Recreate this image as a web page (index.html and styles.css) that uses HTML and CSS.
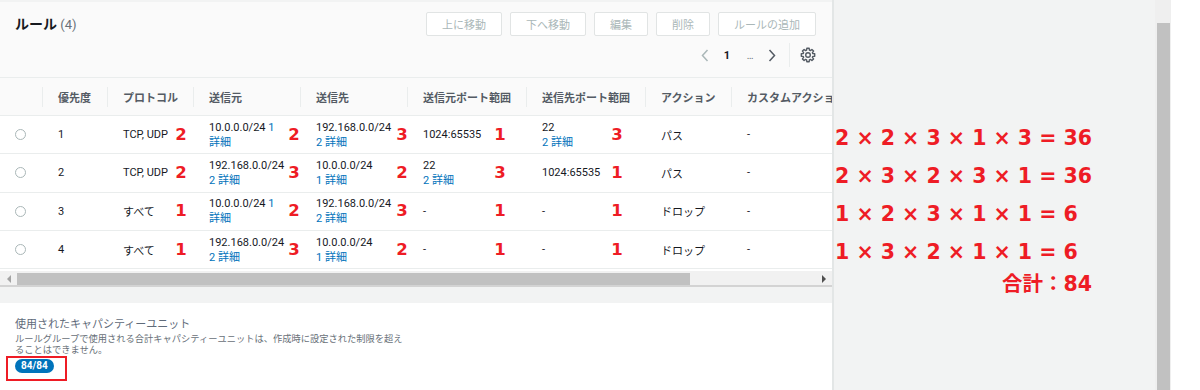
FILE: index.html
```html
<!DOCTYPE html>
<html lang="ja">
<head>
<meta charset="utf-8">
<title>ルール</title>
<link rel="stylesheet" href="styles.css">
</head>
<body>
<div class="page">
  <div class="main">
    <section class="card">
      <div class="hdr">
        <h2 class="title">ルール <span class="count">(4)</span></h2>
        <div class="tools">
          <div class="btns">
            <button class="btn">上に移動</button>
            <button class="btn">下へ移動</button>
            <button class="btn">編集</button>
            <button class="btn">削除</button>
            <button class="btn">ルールの追加</button>
          </div>
          <div class="pager">
            <span class="pg prev"><svg width="8" height="13" viewBox="0 0 8 13"><polyline points="6.5,1 1.5,6.5 6.5,12" fill="none" stroke="#aab7b8" stroke-width="1.5"/></svg></span>
            <span class="pg num">1</span>
            <span class="pg dots">…</span>
            <span class="pg next"><svg width="8" height="13" viewBox="0 0 8 13"><polyline points="1.5,1 6.5,6.5 1.5,12" fill="none" stroke="#545b64" stroke-width="1.5"/></svg></span>
            <span class="vsep"></span>
            <span class="gear"><svg width="16" height="16" viewBox="0 0 16 16"><polygon points="12.81,6.62 14.70,6.82 14.70,9.18 12.81,9.38 12.37,10.42 13.57,11.90 11.90,13.57 10.42,12.37 9.38,12.81 9.18,14.70 6.82,14.70 6.62,12.81 5.58,12.37 4.10,13.57 2.43,11.90 3.63,10.42 3.19,9.38 1.30,9.18 1.30,6.82 3.19,6.62 3.63,5.58 2.43,4.10 4.10,2.43 5.58,3.63 6.62,3.19 6.82,1.30 9.18,1.30 9.38,3.19 10.42,3.63 11.90,2.43 13.57,4.10 12.37,5.58" fill="none" stroke="#545b64" stroke-width="1.4" stroke-linejoin="round"/><circle cx="8" cy="8" r="2.3" fill="none" stroke="#545b64" stroke-width="1.4"/></svg></span>
          </div>
        </div>
      </div>

      <div class="tablewrap">
        <div class="grid">
          <div class="row head">
            <div class="c"></div>
            <div class="c"><span class="h">優先度</span></div>
            <div class="c"><span class="h">プロトコル</span></div>
            <div class="c"><span class="h">送信元</span></div>
            <div class="c"><span class="h">送信先</span></div>
            <div class="c"><span class="h">送信元ポート範囲</span></div>
            <div class="c"><span class="h">送信先ポート範囲</span></div>
            <div class="c"><span class="h">アクション</span></div>
            <div class="c"><span class="h">カスタムアクション</span></div>
          </div>

          <div class="row">
            <div class="c rad"><span class="radio"></span></div>
            <div class="c">1</div>
            <div class="c proto">TCP, UDP<span class="n">2</span></div>
            <div class="c src"><div class="two">10.0.0.0/24 <span class="lnk">1</span><br><span class="lnk">詳細</span></div><span class="n">2</span></div>
            <div class="c dst"><div class="two">192.168.0.0/24<br><span class="lnk">2 詳細</span></div><span class="n">3</span></div>
            <div class="c sport">1024:65535<span class="n">1</span></div>
            <div class="c dport"><div class="two">22<br><span class="lnk">2 詳細</span></div><span class="n">3</span></div>
            <div class="c">パス</div>
            <div class="c">-</div>
          </div>

          <div class="row">
            <div class="c rad"><span class="radio"></span></div>
            <div class="c">2</div>
            <div class="c proto">TCP, UDP<span class="n">2</span></div>
            <div class="c src"><div class="two">192.168.0.0/24<br><span class="lnk">2 詳細</span></div><span class="n">3</span></div>
            <div class="c dst"><div class="two">10.0.0.0/24<br><span class="lnk">1 詳細</span></div><span class="n">2</span></div>
            <div class="c sport"><div class="two">22<br><span class="lnk">2 詳細</span></div><span class="n">3</span></div>
            <div class="c dport">1024:65535<span class="n">1</span></div>
            <div class="c">パス</div>
            <div class="c">-</div>
          </div>

          <div class="row">
            <div class="c rad"><span class="radio"></span></div>
            <div class="c">3</div>
            <div class="c proto">すべて<span class="n">1</span></div>
            <div class="c src"><div class="two">10.0.0.0/24 <span class="lnk">1</span><br><span class="lnk">詳細</span></div><span class="n">2</span></div>
            <div class="c dst"><div class="two">192.168.0.0/24<br><span class="lnk">2 詳細</span></div><span class="n">3</span></div>
            <div class="c sport">-<span class="n">1</span></div>
            <div class="c dport">-<span class="n">1</span></div>
            <div class="c">ドロップ</div>
            <div class="c">-</div>
          </div>

          <div class="row">
            <div class="c rad"><span class="radio"></span></div>
            <div class="c">4</div>
            <div class="c proto">すべて<span class="n">1</span></div>
            <div class="c src"><div class="two">192.168.0.0/24<br><span class="lnk">2 詳細</span></div><span class="n">3</span></div>
            <div class="c dst"><div class="two">10.0.0.0/24<br><span class="lnk">1 詳細</span></div><span class="n">2</span></div>
            <div class="c sport">-<span class="n">1</span></div>
            <div class="c dport">-<span class="n">1</span></div>
            <div class="c">ドロップ</div>
            <div class="c">-</div>
          </div>
        </div>
      </div>

      <div class="hscroll">
        <span class="arr left"></span>
        <span class="hthumb"></span>
        <span class="arr right"></span>
      </div>
    </section>

    <div class="band"></div>

    <section class="cap">
      <div class="cap-title">使用されたキャパシティーユニット</div>
      <p class="cap-desc">ルールグループで使用される合計キャパシティーユニットは、作成時に設定された制限を超えることはできません。</p>
      <div class="mark"><span class="badge">84/84</span></div>
    </section>
  </div>

  <div class="notes">
    <div class="eqs">
      <div class="eq">2 × 2 × 3 × 1 × 3 = 36</div>
      <div class="eq">2 × 3 × 2 × 3 × 1 = 36</div>
      <div class="eq">1 × 2 × 3 × 1 × 1 = 6</div>
      <div class="eq">1 × 3 × 2 × 1 × 1 = 6</div>
      <div class="sum">合計：84</div>
    </div>
  </div>

  <div class="vscroll"><div class="vthumb"></div></div>
  <div class="edge"></div>
</div>
</body>
</html>
```

FILE: styles.css
```css
* { box-sizing: border-box; }

html, body {
  margin: 0;
  padding: 0;
}

body {
  background: #f2f3f3;
  font-family: "Roboto", "Noto Sans CJK JP", sans-serif;
  font-size: 11px;
  color: #16191f;
}

.page {
  display: flex;
  height: 390px;
  overflow: hidden;
}

/* ---------- main column ---------- */
.main {
  flex: 0 0 834px;
  display: flex;
  flex-direction: column;
  padding-top: 2px;
  border-right: 2px solid #e3e6e6;
}

.card {
  background: #fff;
}

.hdr {
  display: flex;
  justify-content: space-between;
  align-items: flex-start;
  padding: 10px 16px 10px 15px;
  background: #fafafa;
  border-bottom: 1px solid #eaeded;
}

.title {
  margin: 0;
  font-family: "Noto Sans CJK JP", sans-serif;
  font-size: 14px;
  font-weight: 700;
  line-height: 23px;
  color: #16191f;
}

.count {
  font-family: "Roboto", sans-serif;
  font-weight: 400;
  font-size: 13px;
  color: #687078;
}

.tools {
  display: flex;
  flex-direction: column;
  align-items: flex-end;
}

.btns {
  display: flex;
  gap: 8px;
}

.btn {
  height: 24px;
  padding: 0 15px;
  background: #fff;
  border: 1px solid #e1e4e4;
  border-radius: 2px;
  font-family: "Noto Sans CJK JP", sans-serif;
  font-size: 11px;
  color: #aab7b8;
  line-height: 22px;
}

.pager {
  display: flex;
  align-items: center;
  height: 24px;
  margin-top: 7px;
}

.pg {
  width: 22px;
  display: flex;
  justify-content: center;
  align-items: center;
}

.num {
  font-weight: 700;
  font-size: 11px;
  color: #16191f;
}

.dots {
  margin-left: 1px;
  font-size: 10px;
  color: #687078;
}

.vsep {
  width: 1px;
  height: 24px;
  margin-left: 6px;
  background: #eaeded;
}

.gear {
  display: flex;
  margin-left: 10px;
}

/* ---------- table ---------- */
.tablewrap {
  width: 832px;
  overflow: hidden;
}

.grid {
  width: 891px;
}

.row {
  display: grid;
  grid-template-columns: 42px 65px 86px 107px 107px 119px 119px 86px 160px;
  height: 38.3px;
  border-bottom: 1px solid #eaeded;
}

.row.head {
  height: 38px;
  background: #fafafa;
  border-bottom: 1px solid #eaeded;
}

.c {
  position: relative;
  display: flex;
  align-items: center;
  padding-left: 16px;
  white-space: nowrap;
}

.head .c {
  padding-left: 0;
  font-family: "Noto Sans CJK JP", sans-serif;
  font-weight: 700;
  color: #545b64;
}

.h {
  display: block;
  border-left: 1px solid #eaeded;
  padding-left: 15px;
  line-height: 20px;
}

.c.rad {
  padding-left: 15px;
}

.radio {
  width: 11px;
  height: 11px;
  border: 1px solid #aab7b8;
  border-radius: 50%;
  background: #fff;
}

.two {
  line-height: 15px;
}

.lnk {
  color: #0073bb;
}

.n {
  position: absolute;
  top: 50%;
  left: var(--x);
  transform: translate(-50%, -46%);
  font-family: "DejaVu Sans", "Noto Sans CJK JP", sans-serif;
  font-weight: 700;
  font-size: 16.5px;
  line-height: 1;
  color: #ee1c25;
}

.proto { --x: 74px; }
.src { --x: 101px; }
.dst { --x: 102px; }
.sport { --x: 93px; }
.dport { --x: 91px; }

/* ---------- horizontal scrollbar ---------- */
.hscroll {
  display: flex;
  align-items: center;
  height: 18px;
  padding-top: 2px;
  background: linear-gradient(#fff 0 2px, #f1f1f1 2px 16px, #d3d3d3 16px 18px);
}

.arr {
  width: 17px;
  height: 14px;
  display: flex;
  align-items: center;
  justify-content: center;
}

.arr::before {
  content: "";
  width: 0;
  height: 0;
  border-top: 4px solid transparent;
  border-bottom: 4px solid transparent;
}

.arr.left::before {
  border-right: 4px solid #a3a3a3;
}

.arr.right {
  margin-left: auto;
}

.arr.right::before {
  border-left: 4px solid #505050;
}

.hthumb {
  width: 673px;
  height: 12px;
  background: #c1c1c1;
}

.band {
  height: 16px;
  background: #f2f3f3;
}

/* ---------- capacity panel ---------- */
.cap {
  flex: 1;
  background: #fff;
  padding: 13px 15px 0 15px;
}

.cap-title {
  font-family: "Noto Sans CJK JP", sans-serif;
  font-size: 11px;
  line-height: 14px;
  color: #5f6b7a;
}

.cap-desc {
  margin: 3px 0 0 0;
  width: 394px;
  font-family: "Noto Sans CJK JP", sans-serif;
  font-size: 9.25px;
  line-height: 11px;
  color: #687078;
}

.mark {
  display: inline-flex;
  margin: 1px 0 0 -9px;
  padding: 1px 11px 6px 7px;
  border: 2px solid #ee1c25;
}

.badge {
  display: inline-block;
  height: 14px;
  padding: 0 6px;
  border-radius: 7px;
  background: #0073bb;
  color: #fff;
  font-weight: 700;
  font-size: 10px;
  line-height: 14px;
}

/* ---------- annotations ---------- */
.notes {
  flex: 0 0 321px;
  padding: 119px 0 0 1px;
}

.eqs {
  display: inline-block;
  font-family: "DejaVu Sans", "Noto Sans CJK JP", sans-serif;
  font-weight: 700;
  font-size: 20.5px;
  color: #ee1c25;
}

.eq {
  line-height: 38px;
  white-space: nowrap;
}

.sum {
  text-align: right;
  line-height: 26px;
  white-space: nowrap;
}

/* ---------- page scrollbar ---------- */
.vscroll {
  flex: 0 0 16px;
  padding: 23px 1px 0 2px;
  background: #efefef;
}

.vthumb {
  height: 100%;
  background: #c1c1c1;
}

.edge {
  flex: 1;
  background: #fff;
}
```
